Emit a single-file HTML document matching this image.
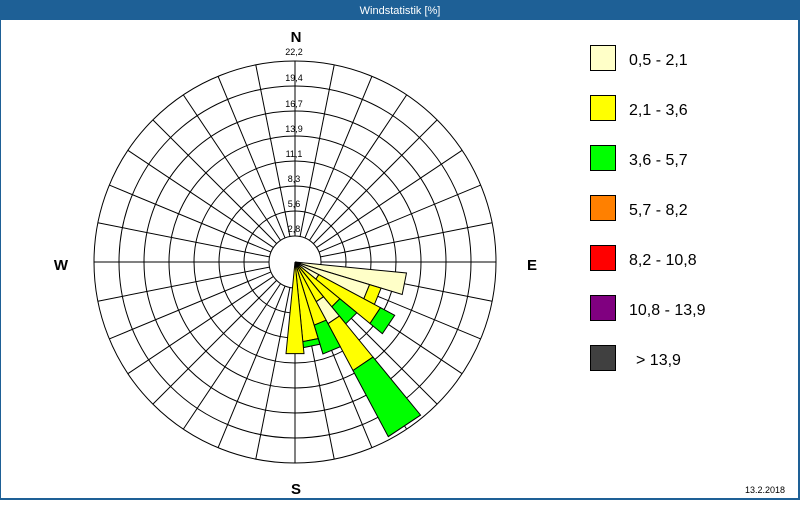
<!DOCTYPE html>
<html><head><meta charset="utf-8"><style>
body{margin:0;width:800px;height:500px;overflow:hidden;background:#fff;font-family:"Liberation Sans",sans-serif}
</style></head><body>
<svg width="800" height="500" xmlns="http://www.w3.org/2000/svg" font-family="Liberation Sans, sans-serif">
<rect x="0" y="0" width="800" height="500" fill="#1e6096"/>
<rect x="1" y="20" width="797" height="478" fill="#fff"/>
<text x="400" y="14" fill="#fff" font-size="11" text-anchor="middle">Windstatistik [%]</text>
<g id="grid" stroke="#000" stroke-width="1" fill="none"></g>
<circle cx="295" cy="262" r="26" fill="#fff" stroke="#000"/>
<g id="bars" stroke="#000" stroke-width="1"></g>
<g font-size="9" fill="#000" text-anchor="middle">
<text x="294" y="232">2,8</text><text x="294" y="207">5,6</text><text x="294" y="182">8,3</text><text x="294" y="157">11,1</text><text x="294" y="132">13,9</text><text x="294" y="107">16,7</text><text x="294" y="81">19,4</text><text x="294" y="55">22,2</text>
</g>
<g font-size="15" font-weight="bold" fill="#000" text-anchor="middle">
<text x="296" y="42">N</text><text x="61" y="270">W</text><text x="532" y="270">E</text><text x="296" y="494">S</text>
</g>
<g stroke="#000" stroke-width="1">
<rect x="590.5" y="45.5" width="25" height="25" fill="#ffffc8"/>
<rect x="590.5" y="95.5" width="25" height="25" fill="#ffff00"/>
<rect x="590.5" y="145.5" width="25" height="25" fill="#00ff00"/>
<rect x="590.5" y="195.5" width="25" height="25" fill="#ff8000"/>
<rect x="590.5" y="245.5" width="25" height="25" fill="#ff0000"/>
<rect x="590.5" y="295.5" width="25" height="25" fill="#800080"/>
<rect x="590.5" y="345.5" width="25" height="25" fill="#404040"/>
</g>
<g font-size="16" fill="#000">
<text x="629" y="65">0,5 - 2,1</text><text x="629" y="115">2,1 - 3,6</text><text x="629" y="165">3,6 - 5,7</text><text x="629" y="215">5,7 - 8,2</text><text x="629" y="265">8,2 - 10,8</text><text x="629" y="315">10,8 - 13,9</text><text x="636" y="365">&gt; 13,9</text>
</g>
<text x="785" y="493" font-size="9" text-anchor="end" fill="#000">13.2.2018</text>
<script>
var cx=295,cy=262,ns="http://www.w3.org/2000/svg";
var g=document.getElementById("grid");
function el(p,t,a){var e=document.createElementNS(ns,t);for(var k in a)e.setAttribute(k,a[k]);p.appendChild(e);return e;}
for(var r=51;r<=201;r+=25)el(g,"circle",{cx:cx,cy:cy,r:r});
for(var i=0;i<32;i++){var a=i*11.25*Math.PI/180;el(g,"line",{x1:cx+26*Math.sin(a),y1:cy-26*Math.cos(a),x2:cx+201*Math.sin(a),y2:cy-201*Math.cos(a)});}
el(g,"line",{x1:95,y1:cy,x2:495,y2:cy});el(g,"line",{x1:cx,y1:61,x2:cx,y2:463});
var P="#ffffc8",Y="#ffff00",G="#00ff00";
var bars=[[101.25,[[P,112]]],[112.5,[[P,78],[Y,90]]],[123.75,[[P,27],[Y,97],[G,113]]],[135,[[Y,58],[G,80]]],[146.25,[[Y,45],[P,70],[Y,123],[G,198]]],[157.5,[[Y,66],[G,96]]],[168.75,[[Y,80],[G,86]]],[180,[[Y,92]]]];
var b=document.getElementById("bars");
function pt(ang,r){var a=ang*Math.PI/180;return (cx+r*Math.sin(a)).toFixed(1)+","+(cy-r*Math.cos(a)).toFixed(1);}
bars.forEach(function(bb){var c=bb[0],r0=0;bb[1].forEach(function(s){var r1=s[1];
var pts=r0==0?[cx+","+cy,pt(c-5.625,r1),pt(c+5.625,r1)]:[pt(c-5.625,r0),pt(c-5.625,r1),pt(c+5.625,r1),pt(c+5.625,r0)];
el(b,"polygon",{points:pts.join(" "),fill:s[0]});r0=r1;});});
</script>
</svg>
</body></html>
